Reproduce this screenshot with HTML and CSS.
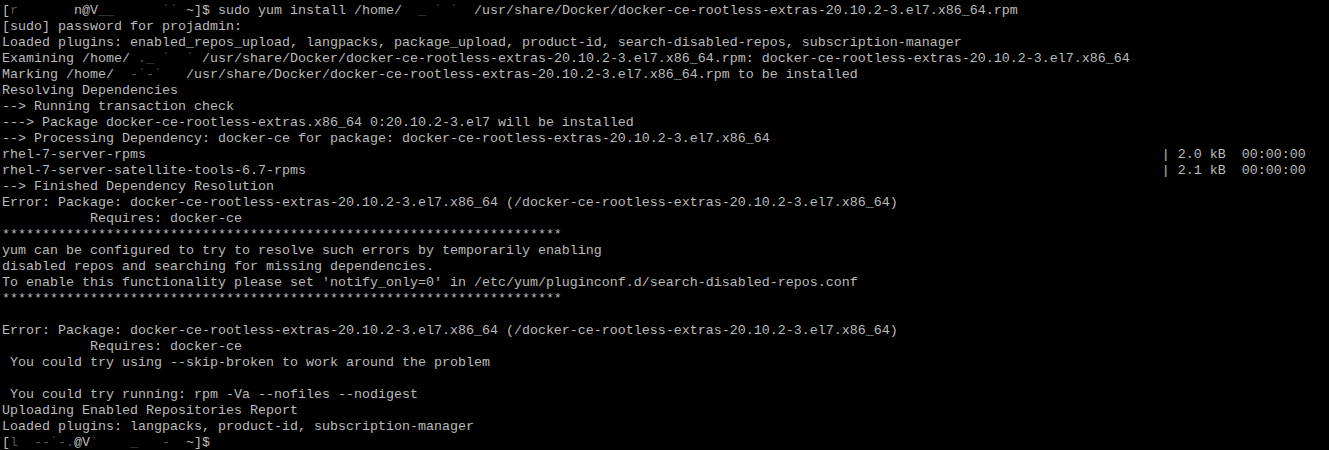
FILE: index.html
```html
<!DOCTYPE html>
<html>
<head>
<meta charset="utf-8">
<link rel="stylesheet" href="styles.css">
</head>
<body>
<div class="term">
<div class="ln">[<span class="red">r       </span>n@V<span class="red">__      ``</span> ~]$ sudo yum install /home/<span class="red">  _ ` `  </span>/usr/share/Docker/docker-ce-rootless-extras-20.10.2-3.el7.x86_64.rpm</div>
<div class="ln">[sudo] password for projadmin:</div>
<div class="ln">Loaded plugins: enabled_repos_upload, langpacks, package_upload, product-id, search-disabled-repos, subscription-manager</div>
<div class="ln">Examining /home/<span class="red"> ._ `  ` </span>/usr/share/Docker/docker-ce-rootless-extras-20.10.2-3.el7.x86_64.rpm: docker-ce-rootless-extras-20.10.2-3.el7.x86_64</div>
<div class="ln">Marking /home/<span class="red">  -`-`   </span>/usr/share/Docker/docker-ce-rootless-extras-20.10.2-3.el7.x86_64.rpm to be installed</div>
<div class="ln">Resolving Dependencies</div>
<div class="ln">--&gt; Running transaction check</div>
<div class="ln">---&gt; Package docker-ce-rootless-extras.x86_64 0:20.10.2-3.el7 will be installed</div>
<div class="ln">--&gt; Processing Dependency: docker-ce for package: docker-ce-rootless-extras-20.10.2-3.el7.x86_64</div>
<div class="ln">rhel-7-server-rpms                                                                                                                               | 2.0 kB  00:00:00</div>
<div class="ln">rhel-7-server-satellite-tools-6.7-rpms                                                                                                           | 2.1 kB  00:00:00</div>
<div class="ln">--&gt; Finished Dependency Resolution</div>
<div class="ln">Error: Package: docker-ce-rootless-extras-20.10.2-3.el7.x86_64 (/docker-ce-rootless-extras-20.10.2-3.el7.x86_64)</div>
<div class="ln">           Requires: docker-ce</div>
<div class="ln">**********************************************************************</div>
<div class="ln">yum can be configured to try to resolve such errors by temporarily enabling</div>
<div class="ln">disabled repos and searching for missing dependencies.</div>
<div class="ln">To enable this functionality please set 'notify_only=0' in /etc/yum/pluginconf.d/search-disabled-repos.conf</div>
<div class="ln">**********************************************************************</div>
<div class="ln"> </div>
<div class="ln">Error: Package: docker-ce-rootless-extras-20.10.2-3.el7.x86_64 (/docker-ce-rootless-extras-20.10.2-3.el7.x86_64)</div>
<div class="ln">           Requires: docker-ce</div>
<div class="ln"> You could try using --skip-broken to work around the problem</div>
<div class="ln"> </div>
<div class="ln"> You could try running: rpm -Va --nofiles --nodigest</div>
<div class="ln">Uploading Enabled Repositories Report</div>
<div class="ln">Loaded plugins: langpacks, product-id, subscription-manager</div>
<div class="ln">[<span class="red">l  --`-.</span>@V<span class="red">`    _   -  </span>~]$</div>
</div>
</body>
</html>
```
FILE: styles.css
```css
html, body {
  margin: 0;
  padding: 0;
  background: #000;
}
.term {
  background: #000;
  color: #bbbbbb;
  font-family: "Liberation Mono", "Courier New", monospace;
  font-size: 13.33px;
  line-height: 16px;
  padding: 3px 0 0 2px;
  height: 447px;
  overflow: hidden;
}
.ln {
  white-space: pre;
  height: 16px;
}
.red {
  color: #555555;
}
```
